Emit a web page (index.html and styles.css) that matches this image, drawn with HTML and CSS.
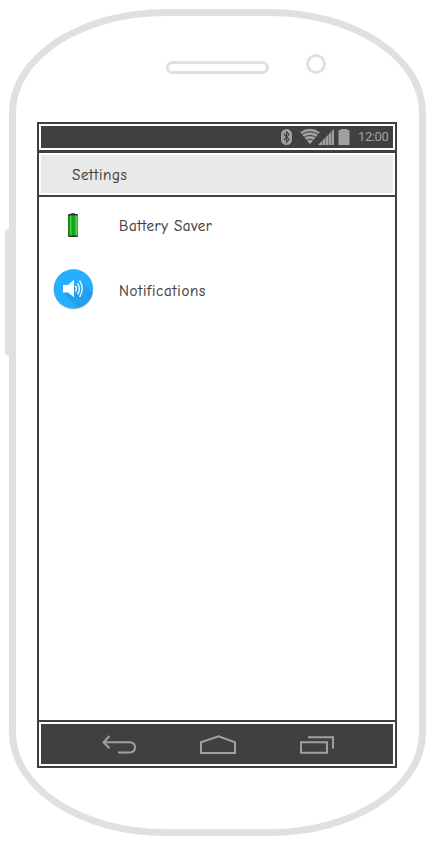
FILE: index.html
```html
<!DOCTYPE html>
<html lang="en">
<head>
<meta charset="utf-8">
<title>Settings</title>
<link rel="stylesheet" href="styles.css">
</head>
<body>
<main class="phone">
  <span class="side-button"></span>
  <div class="top">
    <span class="speaker"></span>
    <span class="camera"></span>
  </div>
  <section class="screen">
    <div class="status">
      <svg class="status-icons" width="72" height="18" viewBox="0 0 72 18">
        <rect x="1" y="1" width="11" height="16" rx="5.5" fill="#a0a0a0"/>
        <path d="M3.800 6l5.200 5.400-2.600 2.700V3.900L9 6.600 3.800 12" fill="none" stroke="#404040" stroke-width="1.100"/>
        <path d="M20.200 4.300Q30-2.600 39.800 4.300L30 16.200z" fill="#a0a0a0"/>
        <path d="M21 6.700Q30 .8 39 6.700M23.400 9.700Q30 5.300 36.600 9.700M25.800 12.600Q30 9.800 34.200 12.600" fill="none" stroke="#404040" stroke-width="1"/>
        <path d="M38 17L54 1v16z" fill="#a0a0a0"/>
        <path d="M42.500 12.500V17M45.500 9.500V17M48.500 6.500V17M51.500 3.500V17" stroke="#404040" stroke-width=".7" opacity=".7"/>
        <path d="M58.500 2H61V1h6v1h2.500v15h-11z" fill="#a0a0a0"/>
      </svg>
      <span class="clock">12:00</span>
    </div>
    <header class="title"><h1 class="settings-text">Settings</h1></header>
    <div class="list">
      <div class="row row-battery">
        <span class="icon-cell">
          <svg width="12" height="26" viewBox="0 0 12 26">
            <defs><linearGradient id="cell" x1="0" x2="1"><stop offset="0" stop-color="#11700f"/><stop offset=".16" stop-color="#1b971a"/><stop offset=".27" stop-color="#5fd35d"/><stop offset=".4" stop-color="#15a313"/><stop offset=".68" stop-color="#18a516"/><stop offset=".82" stop-color="#62d960"/><stop offset="1" stop-color="#259a23"/></linearGradient></defs>
            <path d="M3.800 1.500Q6 .7 8.200 1.500V3h-4.400z" fill="#403c40"/>
            <rect x="1" y="2" width="10" height="23" rx="1" fill="#303330"/>
            <rect x="1" y="3.500" width="10" height="20" fill="url(#cell)"/>
          </svg>
        </span>
        <span class="label battery-text">Battery Saver</span>
      </div>
      <div class="row row-sound">
        <span class="icon-cell">
          <svg width="42" height="42" viewBox="0 0 42 42">
            <defs><clipPath id="disc"><circle cx="21.400" cy="20.900" r="19.600"/></clipPath></defs>
            <circle cx="21.400" cy="21.400" r="19.900" fill="#b5bbc0"/>
            <circle cx="21.400" cy="20.900" r="19.600" fill="#26afff"/>
            <path d="M11 25L30 14 44 28V44H30z" fill="#22a0ec" clip-path="url(#disc)"/>
            <path d="M11 17h5l6-5.200v17.400L16 24.500h-5z" fill="#fff"/>
            <path d="M23.500 18q2 2.800 0 5.600M25.500 15.300q3.800 5.500 0 11M27.600 12.700q5.200 8.200 0 16.200" fill="none" stroke="#fff" stroke-width="1.300"/>
          </svg>
        </span>
        <span class="label notifications-text">Notifications</span>
      </div>
    </div>
    <nav class="navbar">
      <svg width="352" height="40" viewBox="0 0 352 40" fill="none" stroke="#a0a0a0" stroke-width="2">
        <path d="M68.500 12l-6 6.200 6 6M63 18.200h26.500a5.200 5.200 0 0 1 0 10.300H77"/>
        <path d="M160 29V18.200l17.500-5.900L194 18.200V29z"/>
        <path d="M260 18.200h26v10.500h-26zM267 13.200h25v11.300"/>
      </svg>
    </nav>
  </section>
</main>
</body>
</html>
```
FILE: styles.css
```css
* { box-sizing: border-box; }
body {
  margin: 0;
  height: 856px;
  padding: 9px;
  background: #fff;
  color: #404040;
  font-family: "Comic Sans MS", "Comic Neue", "Noto Sans", sans-serif;
  overflow: hidden;
}
.phone {
  position: relative;
  width: 417px;
  height: 827px;
  border: 7px solid #e0e0e0;
  border-radius: 37.5% / 12.5%;
  padding: 0 21px;
}
.side-button {
  position: absolute;
  left: -11px;
  top: 213px;
  width: 7px;
  height: 127px;
  background: #e0e0e0;
  border-radius: 4px 0 0 4px;
}
.top {
  height: 106px;
  display: flex;
  align-items: flex-end;
  gap: 37px;
  padding: 0 0 48px 129px;
}
.speaker {
  width: 103px;
  height: 13px;
  border: 3px solid #e0e0e0;
  border-radius: 7px;
}
.camera {
  width: 20px;
  height: 20px;
  border: 3px solid #e0e0e0;
  border-radius: 50%;
}
.screen {
  width: 360px;
  height: 646px;
  border: 2px solid #404040;
  display: flex;
  flex-direction: column;
}
.status, .title, .navbar {
  border: 2px solid #fff;
  background: #404040;
}
.status {
  height: 26px;
  display: flex;
  align-items: center;
  padding-left: 239px;
  flex: none;
}
.clock {
  font: 13px/22px Roboto, sans-serif;
  width: 31px;
  margin-left: 6px;
  color: #a0a0a0;
  letter-spacing: -.4px;
  white-space: nowrap;
}
.title {
  height: 42px;
  background: #e9e9e9;
  outline: 2px solid #404040;
  margin-top: 3px;
  padding-left: 31px;
  display: flex;
  align-items: center;
  box-shadow: 0 -3px #404040;
  flex: none;
}
h1 { margin: 0; font-weight: 400; }
h1, .label {
  font-size: 15px;
  line-height: 20px;
  padding-top: 2px;
  font-variant-ligatures: none;
  font-feature-settings: "liga" 0, "calt" 0, "clig" 0;
  -webkit-text-stroke: .2px #404040;
}
.settings-text { letter-spacing: .65px; }
.list { flex: 1; padding-top: 2px; }
.row { display: flex; align-items: center; }
.row-battery { height: 56px; }
.row-sound { height: 72px; }
.icon-cell {
  width: 68px;
  margin-right: 12px;
  display: flex;
  justify-content: center;
}
.battery-text { letter-spacing: .58px; }
.notifications-text { letter-spacing: .68px; padding-top: 4px; }
.navbar {
  height: 44px;
  outline: 2px solid #404040;
  flex: none;
}
svg { display: block; flex: none; }
```
